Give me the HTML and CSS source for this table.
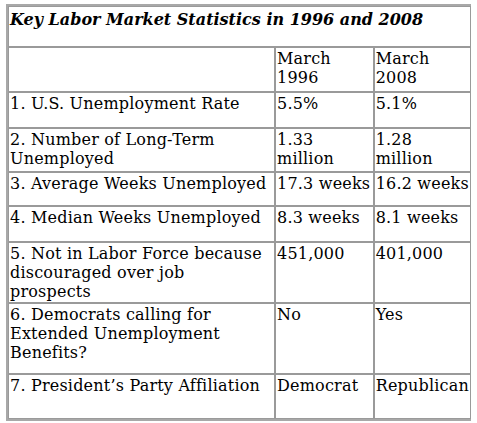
FILE: index.html
```html
<!DOCTYPE html>
<html lang="en">
  <head>
    <meta charset="UTF-8" />
    <title>Key Labor Market Statistics</title>
    <link rel="stylesheet" href="styles.css">
  </head>
  <body>
    <table class="stats">
      <tr class="row-title">
        <td colspan="3" class="title">Key Labor Market Statistics in 1996 and 2008</td>
      </tr>
      <tr class="row-head">
        <td></td>
        <td>March<br>1996</td>
        <td>March<br>2008</td>
      </tr>
      <tr class="row-1">
        <td>1. U.S. Unemployment Rate</td>
        <td>5.5%</td>
        <td>5.1%</td>
      </tr>
      <tr class="row-2">
        <td>2. Number of Long-Term Unemployed</td>
        <td>1.33<br>million</td>
        <td>1.28<br>million</td>
      </tr>
      <tr class="row-3">
        <td>3. Average Weeks Unemployed</td>
        <td>17.3 weeks</td>
        <td>16.2 weeks</td>
      </tr>
      <tr class="row-4">
        <td>4. Median Weeks Unemployed</td>
        <td>8.3 weeks</td>
        <td>8.1 weeks</td>
      </tr>
      <tr class="row-5">
        <td>5. Not in Labor Force because discouraged over job<br>prospects</td>
        <td>451,000</td>
        <td>401,000</td>
      </tr>
      <tr class="row-6">
        <td>6. Democrats calling for Extended Unemployment Benefits?</td>
        <td>No</td>
        <td>Yes</td>
      </tr>
      <tr class="row-7">
        <td>7. President’s Party Affiliation</td>
        <td>Democrat</td>
        <td>Republican</td>
      </tr>
    </table>
  </body>
</html>
```

FILE: styles.css
```css
body {
  margin: 4px 6px;
  background: #fff;
  font-family: "DejaVu Serif", serif;
  font-size: 16px;
  color: #000;
}

.stats {
  border-collapse: separate;
  border-spacing: 0;
  border: 2px solid #a8a8a8;
  width: 467px;
}

.stats td {
  border: 1px solid #9a9a9a;
  padding: 1px;
  vertical-align: top;
  line-height: 19px;
  letter-spacing: 0.2px;
}

.stats td:nth-child(1) {
  width: 267px;
}

.stats td:nth-child(2) {
  width: 95px;
}

.stats .title {
  font-weight: bold;
  font-style: italic;
  letter-spacing: 0;
  padding-top: 3px;
}

.row-title td { height: 35px; }
.row-head td { height: 41px; }
.row-1 td { height: 32px; }
.row-2 td { height: 40px; }
.row-3 td { height: 30px; }
.row-4 td { height: 32px; }
.row-5 td { height: 57px; }
.row-6 td { height: 67px; }
.row-7 td { height: 41px; }
```
